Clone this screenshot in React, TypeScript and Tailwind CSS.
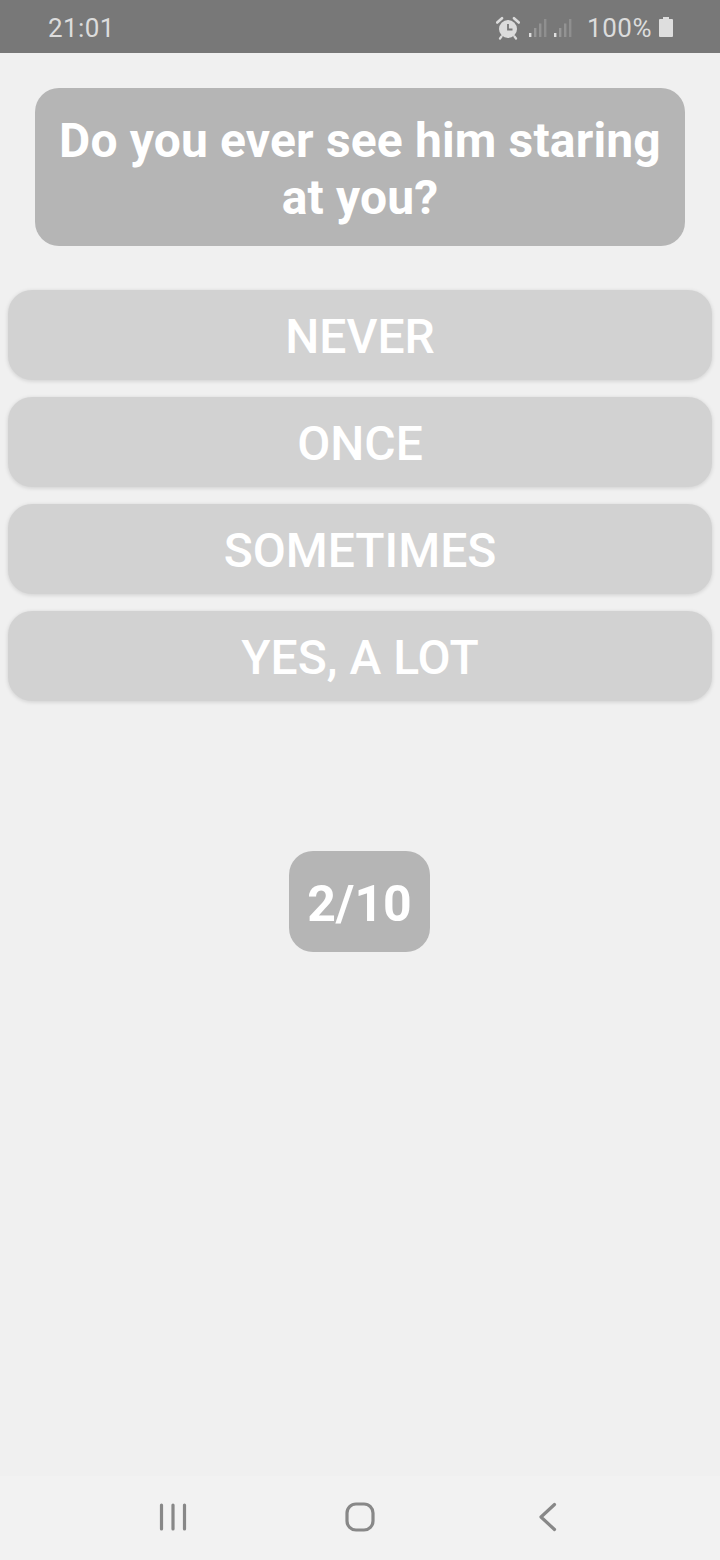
const answers = ['NEVER', 'ONCE', 'SOMETIMES', 'YES, A LOT'];

function AlarmIcon() {
  return (
    <svg width="24" height="24" viewBox="0 0 24 24" fill="none">
      <circle cx="12" cy="13" r="9" fill="#dcdcdc" />
      <path d="M12 8v5.5h4.5" stroke="#787878" strokeWidth="1.8" fill="none" />
      <path d="M1.2 6.5 6 2.2M22.8 6.5 18 2.2" stroke="#dcdcdc" strokeWidth="2.6" strokeLinecap="round" />
      <path d="M5.5 20.5 4 22.5M18.5 20.5 20 22.5" stroke="#dcdcdc" strokeWidth="2.2" strokeLinecap="round" />
    </svg>
  );
}

function SignalIcon() {
  return (
    <svg width="19" height="24" viewBox="0 0 19 24">
      <rect x="1" y="17" width="2.4" height="4" fill="#e0e0e0" />
      <rect x="6" y="12" width="2.4" height="9" fill="#979797" />
      <rect x="11" y="7.5" width="2.4" height="13.5" fill="#939393" />
      <rect x="16" y="3" width="2.4" height="18" fill="#8f8f8f" />
    </svg>
  );
}

function BatteryIcon() {
  return (
    <svg width="16" height="24" viewBox="0 0 16 24">
      <path d="M5 2h6v2h3a1 1 0 0 1 1 1v16a1 1 0 0 1-1 1H2a1 1 0 0 1-1-1V5a1 1 0 0 1 1-1h3z" fill="#dedede" />
    </svg>
  );
}

function StatusBar() {
  return (
    <div className="h-[53px] shrink-0 bg-[#787878] flex items-center justify-between pl-[48px] pr-[46px] pt-[3px] text-[26px] text-[#dcdcdc] font-['Roboto',sans-serif]">
      <span className="tracking-[0.4px]">21:01</span>
      <div className="flex items-center">
        <AlarmIcon />
        <div className="flex items-center ml-[8px] gap-[6px]">
          <SignalIcon />
          <SignalIcon />
        </div>
        <span className="ml-[15px] tracking-[0.5px]">100%</span>
        <div className="ml-[6px] -mt-[3px]">
          <BatteryIcon />
        </div>
      </div>
    </div>
  );
}

function NavBar() {
  return (
    <div className="h-[84px] shrink-0 bg-[#f2f2f2] flex items-center pl-[159px] pb-[3px]">
      <svg width="28" height="28" viewBox="0 0 28 28" stroke="#888888" strokeWidth="3.2" strokeLinecap="round">
        <path d="M2.5 2v24M14 2v24M25.5 2v24" />
      </svg>
      <svg width="30" height="30" viewBox="0 0 30 30" fill="none" stroke="#888888" strokeWidth="3.2" className="ml-[158px]">
        <rect x="2" y="2" width="26" height="26" rx="9" />
      </svg>
      <svg width="20" height="30" viewBox="0 0 20 30" fill="none" stroke="#888888" strokeWidth="3.2" strokeLinecap="round" strokeLinejoin="round" className="ml-[163px]">
        <path d="M16.5 2.5 3 15l13.5 12.5" />
      </svg>
    </div>
  );
}

export default function App() {
  return (
    <div className="w-[720px] h-[1560px] flex flex-col bg-[#f0f0f0] overflow-hidden font-['Roboto',sans-serif] text-white">
      <StatusBar />
      <main className="flex-1 flex flex-col items-center pt-[35px]">
        <h1 className="w-[650px] h-[158px] rounded-[24px] bg-[#b5b5b5] flex items-center justify-center text-center text-[48px] leading-[57px] tracking-[0.15px] font-bold pt-[3px]">
          Do you ever see him staring
          <br />
          at you?
        </h1>
        <div className="w-[704px] mt-[44px] flex flex-col gap-[17px]">
          {answers.map((answer) => (
            <button
              key={answer}
              type="button"
              className="h-[90px] rounded-[24px] bg-[#d2d2d2] shadow-[0_1px_4px_rgba(0,0,0,0.14)] text-[48px] font-medium text-center pt-[4px]"
            >
              {answer}
            </button>
          ))}
        </div>
        <div className="w-[141px] h-[101px] mt-[150px] mr-[1px] rounded-[24px] bg-[#b5b5b5] flex items-center justify-center text-[50px] font-bold pt-[5px]">
          2/10
        </div>
      </main>
      <NavBar />
    </div>
  );
}
